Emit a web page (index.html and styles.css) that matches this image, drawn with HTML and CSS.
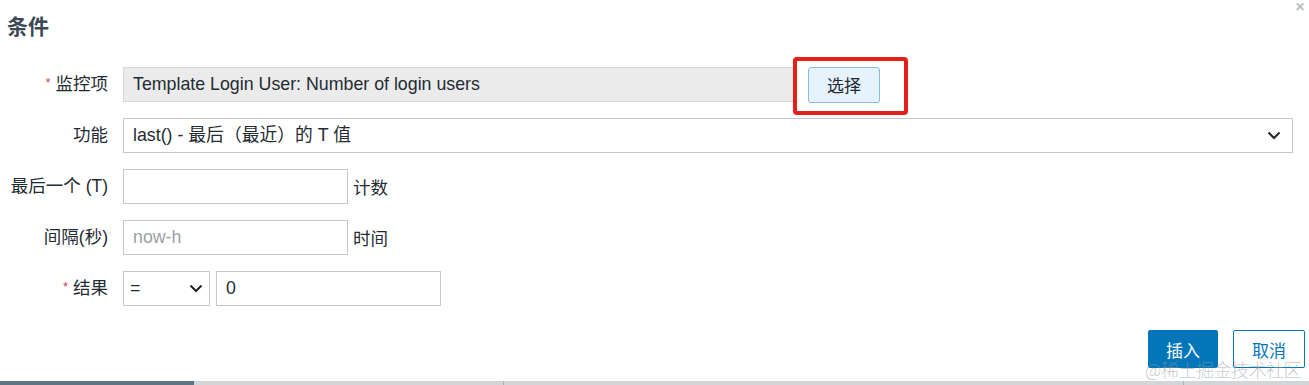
FILE: index.html
```html
<!DOCTYPE html>
<html lang="zh-CN">
<head>
    <meta charset="UTF-8">
    <title>条件</title>
    <link rel="stylesheet" href="styles.css">
</head>
<body>
    <div class="dialog">
        <div class="dialog-head">
            <h2>条件</h2>
            <span class="close">&#x2715;</span>
        </div>
        <div class="form">
            <label class="lbl"><span class="req">*</span> 监控项</label>
            <div class="field">
                <div class="text readonly wide">Template Login User: Number of login users</div>
                <div class="pick">
                    <button class="btn-select">选择</button>
                    <span class="highlight"></span>
                </div>
            </div>

            <label class="lbl">功能</label>
            <div class="field">
                <div class="text select full">
                    <span>last() - 最后（最近）的 T 值</span>
                    <svg class="chev" width="14" height="9" viewBox="0 0 14 9"><path d="M1.5 1.5 L7 7 L12.5 1.5" fill="none" stroke="#222" stroke-width="2"/></svg>
                </div>
            </div>

            <label class="lbl">最后一个 (T)</label>
            <div class="field">
                <div class="text short"></div>
                <span class="unit">计数</span>
            </div>

            <label class="lbl">间隔(秒)</label>
            <div class="field">
                <div class="text short placeholder">now-h</div>
                <span class="unit">时间</span>
            </div>

            <label class="lbl"><span class="req">*</span> 结果</label>
            <div class="field">
                <div class="text select op">
                    <span>=</span>
                    <svg class="chev" width="14" height="9" viewBox="0 0 14 9"><path d="M1.5 1.5 L7 7 L12.5 1.5" fill="none" stroke="#222" stroke-width="2"/></svg>
                </div>
                <div class="text short">0</div>
            </div>
        </div>
        <div class="footer">
            <button class="btn-primary">插入</button>
            <button class="btn-outline">取消</button>
        </div>
        <div class="watermark">@稀土掘金技术社区</div>
    </div>
    <div class="bottom-bar">
        <div class="seg dark"></div>
        <div class="seg light first"></div>
        <div class="seg light second"></div>
        <div class="seg light third"></div>
    </div>
</body>
</html>
```

FILE: styles.css
```css
body {
    margin: 0;
    background-color: #ffffff;
    font-family: "Liberation Sans", Arial, "Noto Sans CJK SC", sans-serif;
    color: #1f2c33;
    height: 385px;
    overflow: hidden;
    position: relative;
}
.dialog {
    position: relative;
    height: 381px;
}
.dialog-head {
    padding: 13px 0 0 7px;
    height: 55px;
    box-sizing: border-box;
}
.dialog-head h2 {
    margin: 0;
    font-size: 21px;
    line-height: 28px;
    font-weight: bold;
    color: #3b4a55;
}
.close {
    position: absolute;
    right: 4px;
    top: 0;
    font-size: 12px;
    color: #b5bbbf;
    font-weight: bold;
}
.form {
    display: grid;
    grid-template-columns: 101px 1fr;
    grid-auto-rows: 35px;
    column-gap: 15px;
    row-gap: 16px;
    padding: 12px 16px 0 7px;
}
.lbl {
    text-align: right;
    font-size: 17.5px;
    line-height: 35px;
    height: 35px;
    color: #1f2c33;
    white-space: nowrap;
}
.req {
    color: #d64541;
    font-size: 13px;
    line-height: 1;
    vertical-align: 3px;
}
.field {
    display: flex;
    align-items: center;
    gap: 6px;
}
.text {
    box-sizing: border-box;
    height: 35px;
    border: 1px solid #c4c9cc;
    background: #ffffff;
    font-size: 17.8px;
    line-height: 33px;
    padding: 0 9px;
    white-space: nowrap;
}
.readonly {
    background: #ebebeb;
    border-color: #d6d9db;
}
.wide {
    width: 673px;
}
.full {
    flex: 1;
}
.short {
    width: 225px;
}
.op {
    width: 87px;
    padding: 0 6px;
}
.select {
    display: flex;
    justify-content: space-between;
    align-items: center;
}
.full .chev {
    margin-right: 2px;
}
.placeholder {
    color: #9aa1a5;
}
.unit {
    font-size: 17.5px;
    margin-left: -1px;
}
.pick {
    position: relative;
    margin-left: 6px;
}
.btn-select {
    display: block;
    width: 72px;
    height: 36px;
    border: 1.5px solid #84bde8;
    border-radius: 3px;
    background: #e6f3fd;
    font-family: "Noto Sans CJK SC", sans-serif;
    font-size: 17px;
    color: #1f2c33;
    padding: 0;
}
.highlight {
    position: absolute;
    left: -15px;
    top: -10px;
    width: 115px;
    height: 58px;
    box-sizing: border-box;
    border: 4px solid #e5201b;
    border-radius: 4px;
}
.footer {
    display: flex;
    justify-content: flex-end;
    gap: 15px;
    padding: 24px 4px 0 0;
}
.footer button {
    height: 38px;
    font-family: "Noto Sans CJK SC", sans-serif;
    font-size: 17px;
    border-radius: 2px;
    padding: 0;
}
.btn-primary {
    width: 70px;
    background: #0276b9;
    border: 1px solid #0276b9;
    color: #ffffff;
}
.btn-outline {
    width: 72px;
    background: #ffffff;
    border: 1px solid #0276b9;
    color: #0276b9;
}
.watermark {
    position: absolute;
    right: 8px;
    bottom: -1px;
    font-family: "Noto Sans CJK SC", sans-serif;
    font-size: 18px;
    font-weight: 300;
    color: rgba(150, 156, 160, 0.55);
    letter-spacing: -0.5px;
}
.bottom-bar {
    display: flex;
    height: 4px;
}
.seg {
    height: 4px;
}
.dark {
    width: 194px;
    background: #5d7482;
}
.light {
    background: #d2d6d8;
}
.first {
    width: 309px;
    border-right: 1px solid #a9b0b4;
}
.second {
    width: 679px;
    border-right: 1px solid #a9b0b4;
}
.third {
    flex: 1;
}
```
